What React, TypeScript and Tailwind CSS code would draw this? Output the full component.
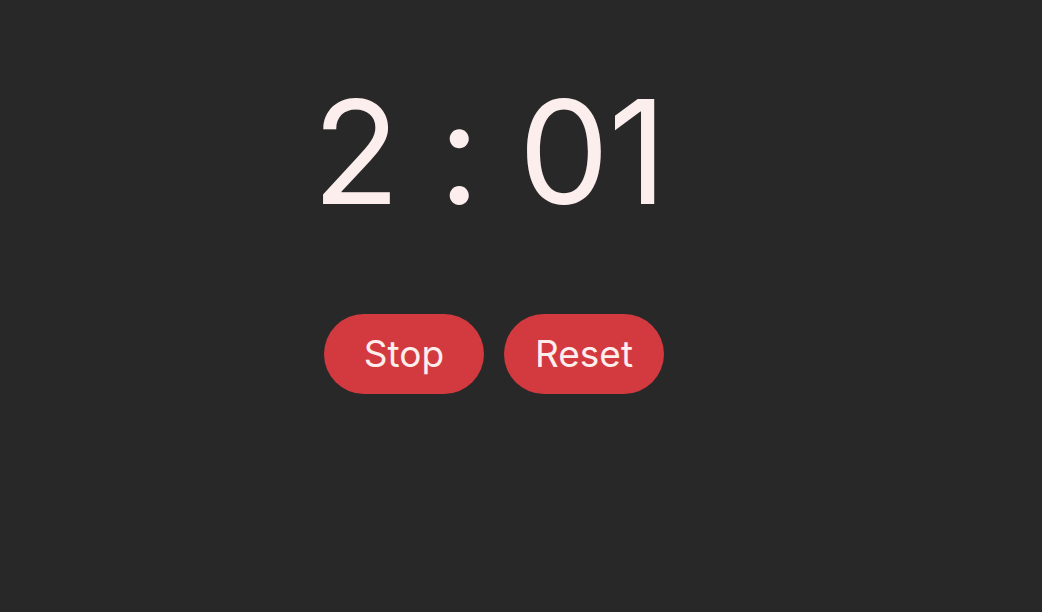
const App = () => {
  return (
    <div className="w-full h-screen bg-[#282828] flex justify-center pr-[54px] font-['Inter',sans-serif]">
      <div className="flex flex-col items-center pt-[66px]">
        <h1 className="mr-[10px] text-[144px] leading-[1.2] text-[#fdeeee] font-normal [font-feature-settings:'calt'_0] tracking-[-1px]">
          2 : 01
        </h1>
        <div className="flex gap-5 mt-[75px]">
          <button className="w-40 h-20 rounded-full bg-[#d33a40] text-[#fdeeee] text-[37px]">
            Stop
          </button>
          <button className="w-40 h-20 rounded-full bg-[#d33a40] text-[#fdeeee] text-[37px]">
            Reset
          </button>
        </div>
      </div>
    </div>
  );
};

export default App;
